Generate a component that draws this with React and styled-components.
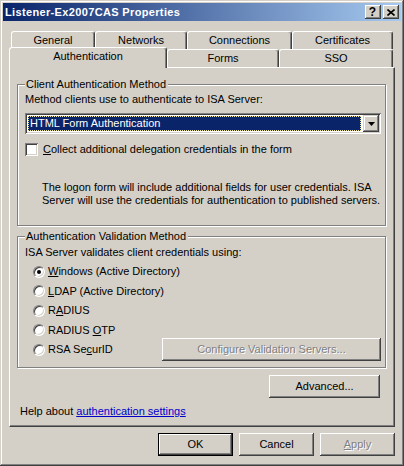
import React from 'react';
import styled, { createGlobalStyle } from 'styled-components';

const GlobalStyle = createGlobalStyle`
  html, body {
    margin: 0;
    padding: 0;
    background: #d4d0c8;
  }
`;

const Window = styled.div`
  box-sizing: border-box;
  width: 404px;
  height: 466px;
  padding: 3px;
  background: #d4d0c8;
  box-shadow: inset -1px -1px #404040, inset 1px 1px #d4d0c8, inset -2px -2px #808080,
    inset 2px 2px #ffffff;
  display: flex;
  flex-direction: column;
  font-family: 'Liberation Sans', Arial, sans-serif;
  font-size: 11px;
  line-height: 13px;
  color: #000;
`;

const TitleBar = styled.div`
  height: 18px;
  flex: none;
  display: flex;
  align-items: flex-start;
  padding: 0 2px;
  background: linear-gradient(to right, #0a246a, #a6caf0);
`;

const Title = styled.div`
  flex: 1;
  color: #fff;
  font-weight: bold;
  letter-spacing: 0.35px;
  line-height: 18px;
  white-space: nowrap;
`;

const CaptionButton = styled.div`
  box-sizing: border-box;
  width: 16px;
  height: 14px;
  margin-top: 2px;
  margin-left: ${(p) => p.$gap || 0}px;
  background: #d4d0c8;
  box-shadow: inset -1px -1px #404040, inset 1px 1px #ffffff, inset -2px -2px #808080;
  display: flex;
  align-items: center;
  justify-content: center;
  font-weight: bold;
  font-size: 12px;
  padding-right: 1px;
`;

const Body = styled.div`
  flex: 1;
  display: flex;
  flex-direction: column;
  padding: 10px 6px 0 6px;
`;

const TabStrip = styled.div`
  height: 36px;
  display: flex;
  flex-direction: column;
`;

const TabRow = styled.div`
  height: 18px;
  display: flex;
  align-items: flex-start;
  padding-left: ${(p) => p.$indent || 0}px;
`;

const Tab = styled.div`
  box-sizing: border-box;
  position: relative;
  z-index: ${(p) => (p.$active ? 2 : 1)};
  width: ${(p) => p.$w}px;
  height: ${(p) => (p.$active ? 21 : 18)}px;
  margin-top: ${(p) => (p.$active ? -2 : 0)}px;
  background: #d4d0c8;
  border-top: 1px solid #fff;
  border-left: 1px solid #fff;
  border-right: 1px solid #404040;
  border-radius: 3px 3px 0 0;
  box-shadow: inset -1px 0 #808080;
  padding-top: 2px;
  text-align: center;
  white-space: nowrap;
`;

const Panel = styled.div`
  box-sizing: border-box;
  height: 360px;
  flex: none;
  border: 1px solid #404040;
  border-top-color: #fff;
  border-left-color: #fff;
  box-shadow: inset -1px -1px #808080;
  padding: 10px 8px 0 7px;
  display: flex;
  flex-direction: column;
`;

const Group = styled.fieldset`
  margin: ${(p) => p.$top}px 0 0 0;
  padding: 0 4px ${(p) => p.$bottom}px 7px;
  border: 1px solid #808080;
  box-shadow: inset 1px 1px #fff, 1px 1px #fff;
  min-width: 0;
  display: flex;
  flex-direction: column;
`;

const Legend = styled.legend`
  padding: 0 2px 0 1px;
  line-height: 13px;
  background: #d4d0c8;
`;

const Text = styled.div`
  margin-top: ${(p) => p.$top || 0}px;
  padding-left: ${(p) => p.$indent || 0}px;
  white-space: nowrap;
`;

const Combo = styled.div`
  box-sizing: border-box;
  margin-top: 7px;
  height: 21px;
  padding: 2px;
  display: flex;
  background: #fff;
  box-shadow: inset 1px 1px #808080, inset -1px -1px #fff, inset 2px 2px #404040,
    inset -2px -2px #d4d0c8;
`;

const ComboValue = styled.div`
  flex: 1;
  margin: 1px 2px 1px 1px;
  padding-left: 1px;
  background: #0a246a;
  color: #fff;
  border: 1px dotted #f2e6a0;
  line-height: 13px;
  white-space: nowrap;
`;

const DropButton = styled.div`
  width: 16px;
  background: #d4d0c8;
  box-shadow: inset -1px -1px #404040, inset 1px 1px #d4d0c8, inset -2px -2px #808080,
    inset 2px 2px #fff;
  display: flex;
  align-items: center;
  justify-content: center;
`;

const CheckRow = styled.div`
  margin-top: 9px;
  height: 13px;
  display: flex;
  align-items: center;
  gap: 5px;
`;

const CheckBox = styled.div`
  width: 13px;
  height: 13px;
  flex: none;
  box-sizing: border-box;
  background: #fff;
  box-shadow: inset 1px 1px #808080, inset -1px -1px #fff, inset 2px 2px #404040,
    inset -2px -2px #d4d0c8;
`;

const RadioList = styled.div`
  margin-top: 6px;
  display: flex;
  flex-direction: column;
  gap: 6.5px;
`;

const RadioRow = styled.div`
  height: 13px;
  display: flex;
  align-items: center;
  padding-left: 8px;
  gap: 3px;
  white-space: nowrap;
`;

const Radio = styled.div`
  box-sizing: border-box;
  width: 12px;
  height: 12px;
  flex: none;
  border-radius: 50%;
  border: 1px solid;
  border-color: #808080 #fff #fff #808080;
  background: #fff;
  box-shadow: inset 1px 1px #404040, inset -1px -1px #d4d0c8;
  display: flex;
  align-items: center;
  justify-content: center;
  &::after {
    content: '';
    display: ${(p) => (p.$checked ? 'block' : 'none')};
    width: 4px;
    height: 4px;
    border-radius: 50%;
    background: #000;
  }
`;

const Button = styled.div`
  box-sizing: border-box;
  width: ${(p) => p.$w}px;
  height: 23px;
  flex: none;
  margin-left: ${(p) => (p.$push ? 'auto' : '0')};
  background: #d4d0c8;
  border: ${(p) => (p.$default ? '1px solid #000' : 'none')};
  box-shadow: ${(p) =>
    p.$default
      ? 'inset -1px -1px #404040, inset 1px 1px #fff, inset -2px -2px #808080'
      : 'inset -1px -1px #404040, inset 1px 1px #fff, inset -2px -2px #808080, inset 2px 2px #d4d0c8'};
  display: flex;
  align-items: center;
  justify-content: center;
  white-space: nowrap;
  color: ${(p) => (p.$disabled ? '#808080' : '#000')};
  text-shadow: ${(p) => (p.$disabled ? '1px 1px #fff' : 'none')};
`;

const AdvancedRow = styled.div`
  margin-top: 7px;
  display: flex;
  justify-content: flex-end;
  padding-right: 6px;
`;

const Link = styled.a`
  color: #0000cc;
  text-decoration: underline;
`;

const Footer = styled.div`
  margin-top: 6px;
  display: flex;
  justify-content: flex-end;
  gap: 6px;
`;

const radios = [
  { label: <><u>W</u>indows (Active Directory)</>, checked: true },
  { label: <><u>L</u>DAP (Active Directory)</> },
  { label: <>R<u>A</u>DIUS</> },
  { label: <>RADIUS <u>O</u>TP</> },
];

export default function App() {
  return (
    <>
      <GlobalStyle />
      <Window>
        <TitleBar>
          <Title>Listener-Ex2007CAS Properties</Title>
          <CaptionButton>?</CaptionButton>
          <CaptionButton $gap={2}>
            <svg width="8" height="7" viewBox="0 0 8 7">
              <path d="M0.5 0.5 L7.5 6.5 M7.5 0.5 L0.5 6.5" stroke="#000" strokeWidth="1.6" />
            </svg>
          </CaptionButton>
        </TitleBar>
        <Body>
          <TabStrip>
            <TabRow $indent={2}>
              <Tab $w={84}>General</Tab>
              <Tab $w={92}>Networks</Tab>
              <Tab $w={105}>Connections</Tab>
              <Tab $w={101}>Certificates</Tab>
            </TabRow>
            <TabRow>
              <Tab $w={158} $active>
                Authentication
              </Tab>
              <Tab $w={112}>Forms</Tab>
              <Tab $w={114}>SSO</Tab>
            </TabRow>
          </TabStrip>
          <Panel>
            <Group $top={0} $bottom={18}>
              <Legend>Client Authentication Method</Legend>
              <Text $top={2}>Method clients use to authenticate to ISA Server:</Text>
              <Combo>
                <ComboValue>HTML Form Authentication</ComboValue>
                <DropButton>
                  <svg width="7" height="4" viewBox="0 0 7 4">
                    <polygon points="0,0 7,0 3.5,4" fill="#000" />
                  </svg>
                </DropButton>
              </Combo>
              <CheckRow>
                <CheckBox />
                <span>
                  <u>C</u>ollect additional delegation credentials in the form
                </span>
              </CheckRow>
              <Text $top={25} $indent={17}>
                The logon form will include additional fields for user credentials. ISA
                <br />
                Server will use the credentials for authentication to published servers.
              </Text>
            </Group>
            <Group $top={4} $bottom={11}>
              <Legend>Authentication Validation Method</Legend>
              <Text $top={3}>ISA Server validates client credentials using:</Text>
              <RadioList>
                {radios.map((r, i) => (
                  <RadioRow key={i}>
                    <Radio $checked={r.checked} />
                    <span>{r.label}</span>
                  </RadioRow>
                ))}
                <RadioRow>
                  <Radio />
                  <span>
                    RSA Se<u>c</u>urID
                  </span>
                  <Button $w={219} $push $disabled>
                    Configure Validation Servers...
                  </Button>
                </RadioRow>
              </RadioList>
            </Group>
            <AdvancedRow>
              <Button $w={111}>Advanced...</Button>
            </AdvancedRow>
            <Text $top={7} $indent={3}>
              Help about <Link>authentication settings</Link>
            </Text>
          </Panel>
          <Footer>
            <Button $w={75} $default>
              OK
            </Button>
            <Button $w={75}>Cancel</Button>
            <Button $w={75} $disabled>
              <span>
                <u>A</u>pply
              </span>
            </Button>
          </Footer>
        </Body>
      </Window>
    </>
  );
}
